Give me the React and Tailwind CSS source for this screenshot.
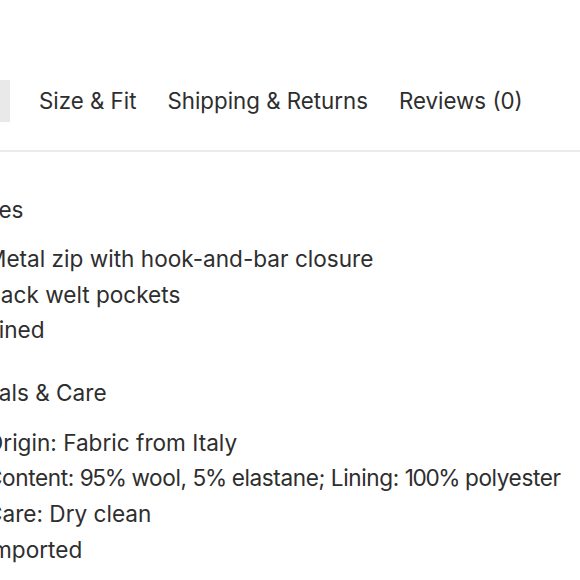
import React from "react";

const tabs = ["Size & Fit", "Shipping & Returns", "Reviews (0)"];

export default function App() {
  return (
    <div
      className="w-[580px] h-[580px] overflow-hidden bg-white text-[#2e2e2e]"
      style={{ fontFamily: "Inter, 'Noto Sans', sans-serif" }}
    >
      <div className="pt-[80px]">
        <div className="border-b-2 border-[#ebebeb] pb-[28px]">
          <div className="flex gap-[27px] text-[22.3px] whitespace-nowrap">
            <div className="w-[10px] shrink-0 flex justify-end">
              <div className="shrink-0 px-[16px] h-[42px] flex items-center bg-[#e9e9e9]">
                Details
              </div>
            </div>
            {tabs.map((t) => (
              <div key={t} className="shrink-0 px-[2px] h-[42px] flex items-center">
                {t}
              </div>
            ))}
          </div>
        </div>
        <div className="ml-[-69px] pt-[44px] text-[22.6px] whitespace-nowrap">
          <h3 className="leading-[28px]">Features</h3>
          <ul className="mt-[17px] pl-[55px] leading-[35.6px]">
            <li>Metal zip with hook-and-bar closure</li>
            <li>Back welt pockets</li>
            <li>Lined</li>
          </ul>
          <h3 className="mt-[31px] leading-[28px]">Materials &amp; Care</h3>
          <ul className="mt-[18px] pl-[55px] leading-[35.6px]">
            <li>Origin: Fabric from Italy</li>
            <li className="tracking-[-0.4px]">
              Content: <span className="tracking-[-1.4px]">95%</span> wool,{" "}
              <span className="tracking-[-1.4px]">5%</span> elastane; Lining:{" "}
              <span className="tracking-[-1.4px]">100%</span> polyester
            </li>
            <li>Care: Dry clean</li>
            <li>Imported</li>
          </ul>
        </div>
      </div>
    </div>
  );
}
